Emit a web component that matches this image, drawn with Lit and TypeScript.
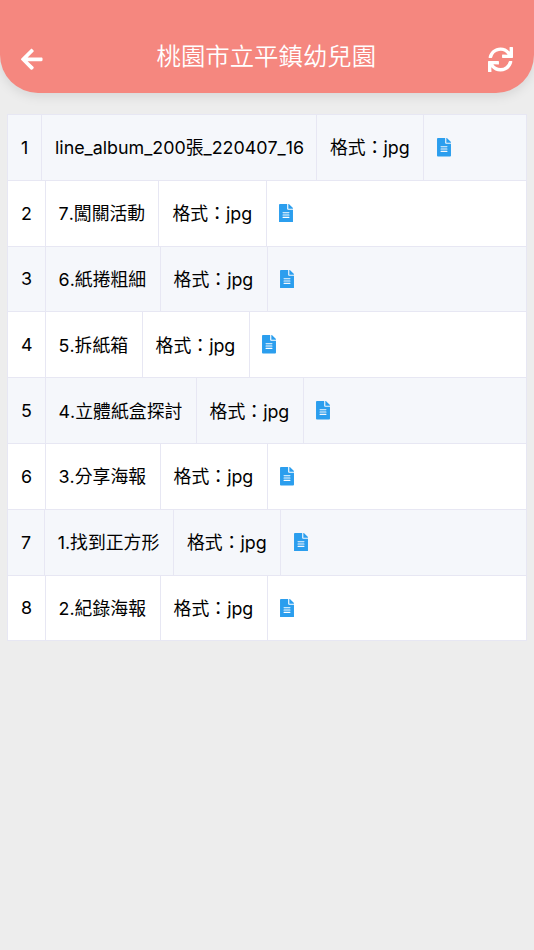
import { LitElement, html, css, svg } from "lit";
import { customElement } from "lit/decorators.js";
import { styleMap } from "lit/directives/style-map.js";

interface FileRow {
  name: string;
  format: string;
  // widths of the number, name and format cells
  columns: [number, number, number];
}

const FILES: FileRow[] = [
  { name: "line_album_200張_220407_16", format: "jpg", columns: [34, 275, 107.4] },
  { name: "7.闖關活動", format: "jpg", columns: [37.6, 113.9, 107.4] },
  { name: "6.紙捲粗細", format: "jpg", columns: [37.6, 115, 107.2] },
  { name: "5.拆紙箱", format: "jpg", columns: [37.6, 97, 107.1] },
  { name: "4.立體紙盒探討", format: "jpg", columns: [37.6, 151, 107.2] },
  { name: "3.分享海報", format: "jpg", columns: [37.6, 115, 107.2] },
  { name: "1.找到正方形", format: "jpg", columns: [36.7, 129.3, 107.4] },
  { name: "2.紀錄海報", format: "jpg", columns: [37.6, 115, 107.2] },
];

const arrowLeft = svg`<path d="M257.5 445.1l-22.2 22.2c-9.4 9.4-24.6 9.4-33.9 0L7 273c-9.4-9.4-9.4-24.6 0-33.9L201.4 44.7c9.4-9.4 24.6-9.4 33.9 0l22.2 22.2c9.5 9.5 9.3 25-.4 34.3L136.6 216H424c13.3 0 24 10.7 24 24v32c0 13.3-10.7 24-24 24H136.6l120.5 114.8c9.8 9.3 10 24.8.4 34.3z"/>`;
const sync = svg`<path d="M440.65 12.57l4 82.77A247.16 247.16 0 0 0 255.83 8C134.73 8 33.91 94.92 12.29 209.82A12 12 0 0 0 24.09 224h49.05a12 12 0 0 0 11.67-9.26 175.91 175.91 0 0 1 317-56.94l-101.46-4.86a12 12 0 0 0-12.57 12v47.41a12 12 0 0 0 12 12H500a12 12 0 0 0 12-12V12a12 12 0 0 0-12-12h-47.37a12 12 0 0 0-11.98 12.57zM255.83 432a175.61 175.61 0 0 1-146-77.8l101.8 4.87a12 12 0 0 0 12.57-12v-47.4a12 12 0 0 0-12-12H12a12 12 0 0 0-12 12V500a12 12 0 0 0 12 12h47.35a12 12 0 0 0 12-12.6l-4.15-82.57A247.17 247.17 0 0 0 255.83 504c121.11 0 221.93-86.92 243.55-201.82a12 12 0 0 0-11.8-14.18h-49.05a12 12 0 0 0-11.67 9.26A175.86 175.86 0 0 1 255.83 432z"/>`;
const fileAlt = svg`<path d="M224 136V0H24C10.7 0 0 10.7 0 24v464c0 13.3 10.7 24 24 24h336c13.3 0 24-10.7 24-24V160H248c-13.2 0-24-10.8-24-24zm64 236c0 6.6-5.4 12-12 12H108c-6.6 0-12-5.4-12-12v-8c0-6.6 5.4-12 12-12h168c6.6 0 12 5.4 12 12v8zm0-64c0 6.6-5.4 12-12 12H108c-6.6 0-12-5.4-12-12v-8c0-6.6 5.4-12 12-12h168c6.6 0 12 5.4 12 12v8zm0-72v8c0 6.6-5.4 12-12 12H108c-6.6 0-12-5.4-12-12v-8c0-6.6 5.4-12 12-12h168c6.6 0 12 5.4 12 12zm96-114.1v6.1H256V0h6.1c6.4 0 12.5 2.5 17 7l97.9 98c4.5 4.5 7 10.6 7 16.9z"/>`;

@customElement("app-root")
export class AppRoot extends LitElement {
  static styles = css`
    :host {
      display: block;
      height: 950px;
      background: #ededed;
      color: #000;
      font-family: Inter, "Noto Sans CJK TC", sans-serif;
      font-size: 17.85px;
      font-weight: 370;
      font-kerning: none;
    }
    .header {
      box-sizing: border-box;
      height: 93px;
      padding: 26px 21px 0 21px;
      display: flex;
      align-items: center;
      justify-content: space-between;
      background: #f5877f;
      border-radius: 0 0 38px 38px;
      box-shadow: 0 3px 12px rgba(0, 0, 0, 0.1);
      color: #fff;
    }
    .title {
      margin: 0;
      padding: 0 0 7px 2px;
      font-size: 24.4px;
      font-weight: 350;
      line-height: 36px;
    }
    svg {
      display: block;
      fill: currentColor;
    }
    .back {
      width: 21.6px;
      height: 24.6px;
    }
    .refresh {
      width: 25px;
      height: 25px;
    }
    .list {
      margin: 21px 7.5px 0 7px;
      border: 1px solid #e7e7f3;
      border-bottom: 0;
    }
    .row {
      box-sizing: border-box;
      height: 65.8px;
      display: grid;
      background: #fff;
      border-bottom: 1px solid #e7e7f3;
    }
    .row:nth-child(odd) {
      background: #f5f7fb;
    }
    .cell {
      box-sizing: border-box;
      display: flex;
      align-items: center;
      padding-left: 13px;
      white-space: nowrap;
      border-right: 1px solid #e7e7f3;
    }
    .text {
      padding-bottom: 2px;
    }
    .cell:last-child {
      border-right: 0;
      padding-left: 12.6px;
    }
    .file {
      width: 14px;
      height: 18.6px;
      color: #2b9eee;
    }
  `;

  render() {
    return html`
      <header class="header">
        <svg class="back" viewBox="0 0 448 512">${arrowLeft}</svg>
        <h1 class="title">桃園市立平鎮幼兒園</h1>
        <svg class="refresh" viewBox="0 0 512 512">${sync}</svg>
      </header>
      <main class="list">
        ${FILES.map(
          (f, i) => html`<div
            class="row"
            style=${styleMap({
              gridTemplateColumns: `${f.columns.map((w) => `${w}px`).join(" ")} 1fr`,
            })}
          >
            <div class="cell">${i + 1}</div>
            <div class="cell text">${f.name}</div>
            <div class="cell text">格式：${f.format}</div>
            <div class="cell"><svg class="file" viewBox="0 0 384 512">${fileAlt}</svg></div>
          </div>`
        )}
      </main>
    `;
  }
}
